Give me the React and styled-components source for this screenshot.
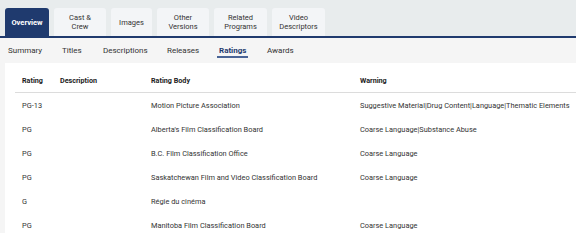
import React from 'react';
import styled, { createGlobalStyle } from 'styled-components';

const Global = createGlobalStyle`
  body {
    margin: 0;
    background: #fff;
    font-family: Roboto, "Liberation Sans", sans-serif;
    color: #333;
  }
`;

const TabBar = styled.div`
  display: flex;
  align-items: flex-end;
  gap: 5px;
  height: 36px;
  padding-left: 5px;
  background: #e8eced;
  border-bottom: 2px solid #1f3a6e;
`;

const Tab = styled.div`
  width: ${p => p.w}px;
  height: 28px;
  display: flex;
  align-items: center;
  justify-content: center;
  text-align: center;
  border-radius: 3px 3px 0 0;
  font-size: 7.5px;
  line-height: 9px;
  background: ${p => (p.active ? '#1f3a6e' : '#f3f5f7')};
  color: ${p => (p.active ? '#fff' : '#333')};
  font-weight: ${p => (p.active ? 700 : 400)};
`;

const SubBar = styled.div`
  display: flex;
  height: 25px;
  padding-left: 8px;
  background: #f5f5f5;
`;

const SubTab = styled.div`
  width: ${p => p.w}px;
  display: flex;
  align-items: center;
  position: relative;
  font-size: 8px;
  color: ${p => (p.active ? '#1f3a6e' : '#333')};
  font-weight: ${p => (p.active ? 700 : 400)};
  &::after {
    content: '';
    display: ${p => (p.active ? 'block' : 'none')};
    position: absolute;
    left: -2px;
    bottom: 5px;
    width: 31px;
    height: 2px;
    background: #4a6496;
  }
`;

const Content = styled.div`
  height: 170px;
  overflow: hidden;
  padding-left: 5px;
  background: #f5f5f5;
`;

const Card = styled.div`
  height: 100%;
  background: #fff;
  padding: 6px 0 0 10px;
`;

const Table = styled.div`
  display: grid;
  grid-template-columns: 38px 91px 209px 1fr;
`;

const HeadCell = styled.div`
  height: 23px;
  display: flex;
  align-items: center;
  padding-left: 7px;
  font-size: 7.2px;
  font-weight: 700;
  color: #222;
  border-bottom: 1.5px solid #dcdcdc;
  white-space: nowrap;
`;

const Cell = styled.div`
  height: 24px;
  display: flex;
  align-items: center;
  padding-left: 7px;
  font-size: 7.4px;
  color: #333;
  white-space: nowrap;
`;

const tabs = [
  { label: 'Overview', w: 44, active: true },
  { label: 'Cast &\nCrew', w: 52 },
  { label: 'Images', w: 41 },
  { label: 'Other\nVersions', w: 52 },
  { label: 'Related\nPrograms', w: 53 },
  { label: 'Video\nDescriptors', w: 53 },
];

const subTabs = [
  { label: 'Summary', w: 54 },
  { label: 'Titles', w: 41 },
  { label: 'Descriptions', w: 64 },
  { label: 'Releases', w: 52 },
  { label: 'Ratings', w: 48, active: true },
  { label: 'Awards', w: 50 },
];

const rows = [
  ['PG-13', '', 'Motion Picture Association', 'Suggestive Material|Drug Content|Language|Thematic Elements'],
  ['PG', '', "Alberta's Film Classification Board", 'Coarse Language|Substance Abuse'],
  ['PG', '', 'B.C. Film Classification Office', 'Coarse Language'],
  ['PG', '', 'Saskatchewan Film and Video Classification Board', 'Coarse Language'],
  ['G', '', 'Régie du cinéma', ''],
  ['PG', '', 'Manitoba Film Classification Board', 'Coarse Language'],
];

export default function App() {
  return (
    <>
      <Global />
      <TabBar>
        {tabs.map(t => (
          <Tab key={t.label} w={t.w} active={t.active}>
            <span>
              {t.label.split('\n').map((l, i) => (
                <React.Fragment key={i}>
                  {i > 0 && <br />}
                  {l}
                </React.Fragment>
              ))}
            </span>
          </Tab>
        ))}
      </TabBar>
      <SubBar>
        {subTabs.map(s => (
          <SubTab key={s.label} w={s.w} active={s.active}>{s.label}</SubTab>
        ))}
      </SubBar>
      <Content>
        <Card>
          <Table>
            {['Rating', 'Description', 'Rating Body', 'Warning'].map(h => (
              <HeadCell key={h}>{h}</HeadCell>
            ))}
            {rows.map((r, i) =>
              r.map((c, j) => <Cell key={i + '-' + j}>{c}</Cell>)
            )}
          </Table>
        </Card>
      </Content>
    </>
  );
}
